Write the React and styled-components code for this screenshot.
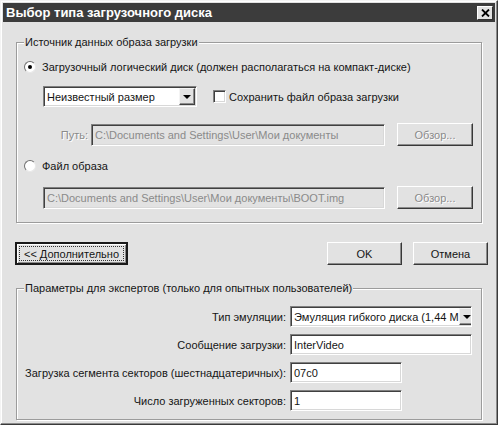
import styled, { createGlobalStyle } from 'styled-components';

const GlobalStyle = createGlobalStyle`
  html, body {
    margin: 0;
    padding: 0;
    background: #ffffff;
  }
  body {
    font-family: "Liberation Sans", Arial, sans-serif;
    font-size: 11px;
    color: #151515;
  }
`;

const Window = styled.div`
  width: 498px;
  height: 425px;
  box-sizing: border-box;
  background: #e2e2e2;
  border: 1px solid;
  border-color: #f4f4f4 #3a3a3a #3a3a3a #f4f4f4;
  box-shadow: inset -1px -1px 0 #8c8c8c, inset 1px 1px 0 #ffffff;
  padding: 2px;
  display: flex;
  flex-direction: column;
`;

const TitleBar = styled.div`
  height: 19px;
  background: #3c3c3c;
  color: #ffffff;
  font-weight: bold;
  font-size: 13px;
  display: flex;
  align-items: center;
  justify-content: space-between;
  padding: 0 2px 0 3px;
`;

const CloseButton = styled.div`
  width: 14px;
  height: 12px;
  background: #e2e2e2;
  border: 1px solid;
  border-color: #ffffff #303030 #303030 #ffffff;
  display: flex;
  align-items: center;
  justify-content: center;
`;

const Body = styled.div`
  padding: 0 13px;
  display: flex;
  flex-direction: column;
`;

const Group = styled.fieldset`
  margin: ${(p) => p.$top}px 0 0 0;
  padding: 0 8px ${(p) => p.$bottom}px ${(p) => p.$left}px;
  border: 1px solid #9c9c9c;
  box-shadow: inset 1px 1px 0 #ffffff, 1px 1px 0 #ffffff;
  min-width: 0;
`;

const Legend = styled.legend`
  padding: 0 1px;
  margin-left: ${(p) => p.$shift || 0}px;
  background: #e2e2e2;
  line-height: 14px;
`;

const OptionRow = styled.div`
  display: flex;
  align-items: center;
  gap: 6px;
  height: 16px;
  margin-top: ${(p) => p.$top}px;
`;

const Radio = styled.span`
  width: 12px;
  height: 12px;
  box-sizing: border-box;
  border-radius: 50%;
  background: #ffffff;
  border: 1px solid;
  border-color: #707070 #e8e8e8 #e8e8e8 #707070;
  display: flex;
  align-items: center;
  justify-content: center;
  &::after {
    content: "";
    width: 4px;
    height: 4px;
    border-radius: 50%;
    background: ${(p) => (p.$checked ? '#000' : 'transparent')};
  }
`;

const Line = styled.div`
  display: flex;
  align-items: center;
  gap: ${(p) => p.$gap || 0}px;
  margin-top: ${(p) => p.$top}px;
  margin-left: ${(p) => p.$indent || 0}px;
`;

const Field = styled.div`
  width: ${(p) => p.$w}px;
  height: ${(p) => p.$h || 21}px;
  box-sizing: border-box;
  background: ${(p) => (p.$disabled ? '#e2e2e2' : '#ffffff')};
  color: ${(p) => (p.$disabled ? '#8a8a8a' : '#151515')};
  border: 1px solid;
  border-color: #808080 #ffffff #ffffff #808080;
  box-shadow: inset 1px 1px 0 #404040, inset -1px -1px 0 #d8d8d8;
  display: flex;
  align-items: center;
  padding: 0 2px 0 3px;
  white-space: nowrap;
  overflow: hidden;
`;

const ComboText = styled.span`
  flex: 1;
  white-space: nowrap;
`;

const ComboArrow = styled.span`
  width: 16px;
  height: 17px;
  box-sizing: border-box;
  flex-shrink: 0;
  background: #e2e2e2;
  border: 1px solid;
  border-color: #f4f4f4 #404040 #404040 #f4f4f4;
  box-shadow: inset -1px -1px 0 #8c8c8c;
  display: flex;
  align-items: center;
  justify-content: center;
  margin-right: -1px;
  &::after {
    content: "";
    border-left: 4px solid transparent;
    border-right: 4px solid transparent;
    border-top: 4px solid #000;
  }
`;

const Check = styled.span`
  width: 13px;
  height: 13px;
  box-sizing: border-box;
  background: #ffffff;
  border: 1px solid;
  border-color: #808080 #ffffff #ffffff #808080;
  box-shadow: inset 1px 1px 0 #404040, inset -1px -1px 0 #d8d8d8;
  margin-left: 16px;
  margin-right: 3px;
`;

const Label = styled.span`
  white-space: nowrap;
  color: ${(p) => (p.$disabled ? '#8a8a8a' : '#151515')};
  text-shadow: ${(p) => (p.$disabled ? '1px 1px 0 #ffffff' : 'none')};
  width: ${(p) => (p.$w ? `${p.$w}px` : 'auto')};
  text-align: ${(p) => (p.$w ? 'right' : 'left')};
`;

const Button = styled.div`
  width: ${(p) => p.$w}px;
  height: 23px;
  box-sizing: border-box;
  background: #e2e2e2;
  border: 1px solid;
  border-color: #ffffff #383838 #383838 #ffffff;
  box-shadow: inset -1px -1px 0 #8c8c8c;
  display: flex;
  align-items: center;
  justify-content: center;
  color: ${(p) => (p.$disabled ? '#8a8a8a' : '#151515')};
  text-shadow: ${(p) => (p.$disabled ? '1px 1px 0 #ffffff' : 'none')};
  white-space: nowrap;
`;

const DefaultButton = styled.div`
  width: 113px;
  height: 23px;
  box-sizing: border-box;
  background: #e2e2e2;
  border: 2px solid #1a1a1a;
  box-shadow: inset 1px 1px 0 #ffffff, inset -1px -1px 0 #8c8c8c;
  padding: 2px;
  display: flex;
`;

const FocusRect = styled.div`
  flex: 1;
  border: 1px dotted #333;
  display: flex;
  align-items: center;
  justify-content: center;
  white-space: nowrap;
`;

const ButtonRow = styled.div`
  display: flex;
  align-items: center;
  gap: 11px;
  margin: 19px -6px 0 -1px;
`;

const Spacer = styled.div`
  flex: 1;
`;

const ExpertGrid = styled.div`
  display: grid;
  grid-template-columns: 265px auto;
  column-gap: 4px;
  row-gap: 7px;
  align-items: center;
  margin-top: 11px;
`;

const GridLabel = styled.span`
  text-align: right;
  white-space: nowrap;
`;

function App() {
  return (
    <>
      <GlobalStyle />
      <Window>
        <TitleBar>
          <span>Выбор типа загрузочного диска</span>
          <CloseButton>
            <svg width="9" height="8" viewBox="0 0 9 8">
              <path d="M1 0.5 L8 7.5 M8 0.5 L1 7.5" stroke="#000" strokeWidth="1.8" />
            </svg>
          </CloseButton>
        </TitleBar>
        <Body>
          <Group $top={13} $bottom={13} $left={7}>
            <Legend>Источник данных образа загрузки</Legend>
            <OptionRow $top={10}>
              <Radio $checked />
              <span>Загрузочный логический диск (должен располагаться на компакт-диске)</span>
            </OptionRow>
            <Line $top={11} $indent={19}>
              <Field $w={154}>
                <ComboText>Неизвестный размер</ComboText>
                <ComboArrow />
              </Field>
              <Check />
              <Label>Сохранить файл образа загрузки</Label>
            </Line>
            <Line $top={16} $gap={3}>
              <Label $disabled $w={64}>Путь:</Label>
              <Field $w={294} $h={22} $disabled>C:\Documents and Settings\User\Мои документы</Field>
              <Spacer />
              <Button $w={76} $disabled>Обзор...</Button>
            </Line>
            <OptionRow $top={12}>
              <Radio />
              <span>Файл образа</span>
            </OptionRow>
            <Line $top={12} $indent={19}>
              <Field $w={342} $h={22} $disabled>C:\Documents and Settings\User\Мои документы\BOOT.img</Field>
              <Spacer />
              <Button $w={76} $disabled>Обзор...</Button>
            </Line>
          </Group>

          <ButtonRow>
            <DefaultButton>
              <FocusRect>&lt;&lt; Дополнительно</FocusRect>
            </DefaultButton>
            <Spacer />
            <Button $w={75}>OK</Button>
            <Button $w={75}>Отмена</Button>
          </ButtonRow>

          <Group $top={16} $bottom={8} $left={4}>
            <Legend $shift={3}>Параметры для экспертов (только для опытных пользователей)</Legend>
            <ExpertGrid>
              <GridLabel>Тип эмуляции:</GridLabel>
              <Field $w={182}>
                <ComboText>Эмуляция гибкого диска (1,44 М</ComboText>
                <ComboArrow />
              </Field>
              <GridLabel>Сообщение загрузки:</GridLabel>
              <Field $w={182}>InterVideo</Field>
              <GridLabel>Загрузка сегмента секторов (шестнадцатеричных):</GridLabel>
              <Field $w={112}>07c0</Field>
              <GridLabel>Число загруженных секторов:</GridLabel>
              <Field $w={112}>1</Field>
            </ExpertGrid>
          </Group>
        </Body>
      </Window>
    </>
  );
}

export default App;
